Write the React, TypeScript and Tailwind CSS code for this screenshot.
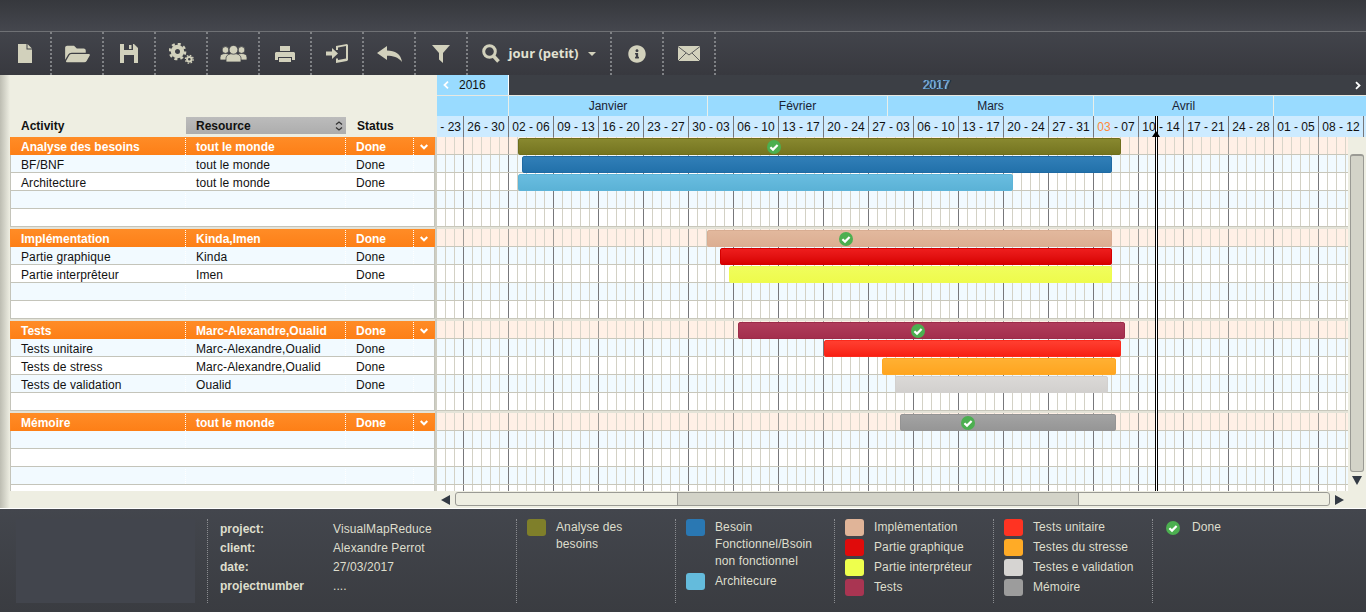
import { ReactNode } from "react";
import { FaInfoCircle, FaFolderOpen } from "react-icons/fa";

type Bar = { pos: string; color: string; check?: string };
type Row = { activity: string; resource: string; status: string; bar?: Bar };

const groups: Row[][] = [
  [
    { activity: "Analyse des besoins", resource: "tout le monde", status: "Done", bar: { pos: "left-[81px] w-[603px]", color: "from-[#88882f] to-[#757520] border-[#6e6e1c]", check: "left-[248px]" } },
    { activity: "BF/BNF", resource: "tout le monde", status: "Done", bar: { pos: "left-[85px] w-[590px]", color: "from-[#317fb8] to-[#2271aa] border-[#1f6aa3]" } },
    { activity: "Architecture", resource: "tout le monde", status: "Done", bar: { pos: "left-[81px] w-[495px]", color: "from-[#69bde0] to-[#5bb2d6] border-[#5db4d8]" } },
    { activity: "", resource: "", status: "" },
    { activity: "", resource: "", status: "" },
  ],
  [
    { activity: "Implémentation", resource: "Kinda,Imen", status: "Done", bar: { pos: "left-[270px] w-[405px]", color: "from-[#e2b89d] to-[#dcae92] border-[#d9ad92]", check: "left-[131px]" } },
    { activity: "Partie graphique", resource: "Kinda", status: "Done", bar: { pos: "left-[283px] w-[392px]", color: "from-[#ee1d1d] to-[#d80000] border-[#d50000]" } },
    { activity: "Partie interprêteur", resource: "Imen", status: "Done", bar: { pos: "left-[292px] w-[383px]", color: "from-[#f0fd5c] to-[#eefb4c] border-[#eefb50]" } },
    { activity: "", resource: "", status: "" },
    { activity: "", resource: "", status: "" },
  ],
  [
    { activity: "Tests", resource: "Marc-Alexandre,Oualid", status: "Done", bar: { pos: "left-[301px] w-[387px]", color: "from-[#b03c5b] to-[#a32e4d] border-[#9c2b49]", check: "left-[172px]" } },
    { activity: "Tests unitaire", resource: "Marc-Alexandre,Oualid", status: "Done", bar: { pos: "left-[387px] w-[297px]", color: "from-[#ff3e30] to-[#f81f12] border-[#fb2a1c]" } },
    { activity: "Tests de stress", resource: "Marc-Alexandre,Oualid", status: "Done", bar: { pos: "left-[445px] w-[234px]", color: "from-[#ffb032] to-[#ffa51f] border-[#ffa822]" } },
    { activity: "Tests de validation", resource: "Oualid", status: "Done", bar: { pos: "left-[458px] w-[213px]", color: "from-[#dbd9d7] to-[#d2d0ce] border-[#d2d0ce]" } },
    { activity: "", resource: "", status: "" },
  ],
  [
    { activity: "Mémoire", resource: "tout le monde", status: "Done", bar: { pos: "left-[463px] w-[216px]", color: "from-[#a3a3a3] to-[#969696] border-[#949494]", check: "left-[60px]" } },
    { activity: "", resource: "", status: "" },
    { activity: "", resource: "", status: "" },
    { activity: "", resource: "", status: "" },
    { activity: "", resource: "", status: "" },
  ],
];

const weeks = ["26 - 30", "02 - 06", "09 - 13", "16 - 20", "23 - 27", "30 - 03", "06 - 10", "13 - 17", "20 - 24", "27 - 03", "06 - 10", "13 - 17", "20 - 24", "27 - 31", "03 - 07", "10 - 14", "17 - 21", "24 - 28", "01 - 05", "08 - 12"];

const months = [
  { name: "", w: "w-[72px]" },
  { name: "Janvier", w: "w-[199px]" },
  { name: "Février", w: "w-[180px]" },
  { name: "Mars", w: "w-[206px]" },
  { name: "Avril", w: "w-[180px]" },
  { name: "", w: "flex-1" },
];

const gridLines =
  "bg-[repeating-linear-gradient(90deg,transparent_0,transparent_8px,#d3d1c5_8px,#d3d1c5_9px,transparent_9px,transparent_17px,#d3d1c5_17px,#d3d1c5_18px,transparent_18px,transparent_26px,#77777b_26px,#77777b_27px,transparent_27px,transparent_35px,#d3d1c5_35px,#d3d1c5_36px,transparent_36px,transparent_44px,#d3d1c5_44px,#d3d1c5_45px)]";
const gridLinesGroup =
  "bg-[repeating-linear-gradient(90deg,transparent_0,transparent_8px,#d9d5c9_8px,#d9d5c9_9px,transparent_9px,transparent_17px,#d9d5c9_17px,#d9d5c9_18px,transparent_18px,transparent_26px,#a09c98_26px,#a09c98_27px,transparent_27px,transparent_35px,#d9d5c9_35px,#d9d5c9_36px,transparent_36px,transparent_44px,#d9d5c9_44px,#d9d5c9_45px)]";

function Check({ className = "" }: { className?: string }) {
  return (
    <svg viewBox="0 0 14 14" className={`h-[14px] w-[14px] ${className}`}>
      <circle cx="7" cy="7" r="7" fill="#4caf50" />
      <path d="M3.4 7.2 6 9.6 10.6 5" fill="none" stroke="#fff" strokeWidth="2.2" />
    </svg>
  );
}

function ToolButton({ children, wide }: { children: ReactNode; wide?: boolean }) {
  return (
    <div className={`flex h-full items-center justify-center border-r-2 border-dotted border-[#7f8185] text-[#d2d1bc] ${wide ? "w-[144px]" : "w-[52px]"}`}>
      {children}
    </div>
  );
}

function Toolbar() {
  return (
    <div className="flex h-[44px] border-t border-[#6f7175] bg-linear-to-b from-[#42444b] to-[#38393f]">
      <ToolButton>
        <svg viewBox="0 0 14 19" className="h-[19px] w-[14px]" fill="#d2d1bc">
          <path d="M0 0h8.500v5.500H14V19H0zM9.500 0 14 4.500H9.500z" />
        </svg>
      </ToolButton>
      <ToolButton>
        <FaFolderOpen className="h-[22px] w-[25px]" />
      </ToolButton>
      <ToolButton>
        <svg viewBox="0 0 18 19" className="h-[19px] w-[18px]" fill="#d2d1bc">
          <path fillRule="evenodd" d="M0 0h14l4 4v15H0zM4 0v6h9V0zM9 1h2.500v4H9zM4 11v8h10v-8z" />
        </svg>
      </ToolButton>
      <ToolButton>
        <svg viewBox="0 0 25 21" className="h-[21px] w-[25px]" fill="none" stroke="#d2d1bc">
          <circle cx="8.500" cy="8.500" r="4.600" strokeWidth="4.200" />
          <circle cx="8.500" cy="8.500" r="7.600" strokeWidth="2.500" strokeDasharray="3 2.970" />
          <circle cx="20.300" cy="16.300" r="2.300" strokeWidth="2" />
          <circle cx="20.300" cy="16.300" r="3.900" strokeWidth="1.300" strokeDasharray="1.600 1.460" />
        </svg>
      </ToolButton>
      <ToolButton>
        <svg viewBox="0 0 27 17" className="h-[17px] w-[27px]" fill="#d2d1bc" stroke="#3d3f45" strokeWidth="0.800">
          <circle cx="5.500" cy="5" r="3.400" />
          <path d="M0 15v-2.500C0 9.500 2.500 8.500 5.500 8.500S11 9.500 11 12.500V15z" />
          <circle cx="21.500" cy="5" r="3.400" />
          <path d="M16 15v-2.500c0-3 2.500-4 5.500-4s5.500 1 5.500 4V15z" />
          <path d="M6 17v-3.500C6 10 9.500 8.500 13.500 8.500S21 10 21 13.500V17z" />
          <circle cx="13.500" cy="4.800" r="4.400" />
        </svg>
      </ToolButton>
      <ToolButton>
        <svg viewBox="0 0 20 16" className="h-[16px] w-[20px]" fill="#d2d1bc">
          <path d="M5 0h10v5H5zM1 6h18l1 1v7h-3v-3H3v3H0V7zM4 12h12v4H4z" />
        </svg>
      </ToolButton>
      <ToolButton>
        <svg viewBox="0 0 22 19" className="h-[19px] w-[22px]" fill="#d2d1bc">
          <path fillRule="evenodd" d="M10 2 21 0l1 1v15l-1 1-11 2v-4.500h2V16l8-1.500V2l-8 1.500V6h-2z" />
          <path d="M0 7.500h6V4l6 5.500L6 15v-3.500H0z" />
        </svg>
      </ToolButton>
      <ToolButton>
        <svg viewBox="0 0 25 16" className="h-[16px] w-[25px]" fill="#d2d1bc">
          <path d="M0 7 10 0v4.500C18 4.500 24 8 25 16 21 11 16 9.700 10 9.700V14z" />
        </svg>
      </ToolButton>
      <ToolButton>
        <svg viewBox="0 0 18 18" className="h-[18px] w-[18px]" fill="#d2d1bc">
          <path d="M0 0h18l-7 8v10l-4-3.500V8z" />
        </svg>
      </ToolButton>
      <ToolButton wide>
        <svg viewBox="0 0 18 19" className="h-[19px] w-[18px]" fill="none" stroke="#d2d1bc">
          <circle cx="7.500" cy="7.500" r="5.800" strokeWidth="3" />
          <path d="M11.500 12 16.500 17.500" strokeWidth="3.600" />
        </svg>
        <span className="ml-[9px] font-['Open_Sans',sans-serif] text-[13px] font-bold text-[#e2e2d2]">jour (petit)</span>
        <span className="ml-[10px] h-0 w-0 border-x-[4px] border-t-[4px] border-x-transparent border-t-[#d2d1bc]" />
      </ToolButton>
      <ToolButton>
        <FaInfoCircle className="h-[18px] w-[18px]" />
      </ToolButton>
      <ToolButton>
        <svg viewBox="0 0 22 15" className="h-[15px] w-[22px]">
          <path d="M0 0h22v15H0z" fill="#d2d1bc" />
          <path d="M0 .5 11 9 22 .5M0 15l8-8M22 15l-8-8" fill="none" stroke="#3c3e44" strokeWidth="0.8" />
        </svg>
      </ToolButton>
    </div>
  );
}

function TaskTable() {
  return (
    <div className="flex w-[427px] flex-col">
      <div className="flex h-[62px] items-end pb-[3px] font-bold text-[#111]">
        <div className="flex h-[17px] w-[176px] items-center pl-[11px]">Activity</div>
        <div className="flex h-[17px] w-[160px] items-center justify-between bg-linear-to-b from-[#bcbcbc] to-[#adadad] pl-[10px] pr-[3px]">
          Resource
          <svg viewBox="0 0 8 10" className="h-[10px] w-[8px]" fill="none" stroke="#333" strokeWidth="1.300">
            <path d="M1 3.500 4 1l3 2.500M1 6.500 4 9l3-2.500" />
          </svg>
        </div>
        <div className="flex h-[17px] items-center pl-[11px]">Status</div>
      </div>
      <div className="h-[354px] overflow-hidden border-r-2 border-[#cfcec3]">
        {groups.map((rows, g) => (
          <div key={g} className="border-b-2 border-[#e4e3d8]">
            {rows.map((row, i) => (
              <div
                key={i}
                className={`flex h-[18px] items-center border-x ${
                  i === 0
                    ? "border-[#ff8620] bg-linear-to-b from-[#ff8c26] to-[#fd7f16] pt-[1px] font-bold text-white"
                    : `border-b border-[#c4c4ba] pt-[2px] tracking-[0.1px] text-[#111] ${i % 2 === 1 ? "bg-[#f2faff]" : "bg-white"}`
                }`}
              >
                <div className="flex h-full w-[175px] items-center border-r border-dotted border-white pl-[10px]">{row.activity}</div>
                <div className="flex h-full w-[160px] items-center border-r border-dotted border-white pl-[10px]">{row.resource}</div>
                <div className="flex h-full w-[68px] items-center border-r border-dotted border-white pl-[10px]">{row.status}</div>
                <div className="flex flex-1 justify-center">
                  {i === 0 && (
                    <svg viewBox="0 0 8 6" className="h-[6px] w-[8px]" fill="none" stroke="#fff" strokeWidth="2">
                      <path d="M.7 1 4 4.300 7.300 1" />
                    </svg>
                  )}
                </div>
              </div>
            ))}
          </div>
        ))}
      </div>
    </div>
  );
}

function GanttHeader() {
  return (
    <div className="h-[62px]">
      <div className="flex h-[20px] items-center">
        <div className="flex h-full w-[72px] items-center border-r border-white bg-[#99dbff] pl-[6px] text-[#111]">
          <svg viewBox="0 0 6 8" className="h-[8px] w-[6px]" fill="none" stroke="#fff" strokeWidth="1.800">
            <path d="M5 .7 1.500 4 5 7.300" />
          </svg>
          <span className="ml-[10px]">2016</span>
        </div>
        <div className="flex-1 pl-[10px] text-center text-[#4f8fc4] [text-shadow:1px_0_0_#16283c,-1px_0_0_#a8d6f5]">2017</div>
        <svg viewBox="0 0 6 8" className="mr-[5px] h-[9px] w-[6px]" fill="none" stroke="#fff" strokeWidth="1.800">
          <path d="M1 .7 4.500 4 1 7.300" />
        </svg>
      </div>
      <div className="flex h-[21px] border-t border-[#e8e8e0] bg-[#99dbff] text-[#1b2233]">
        {months.map((m, i) => (
          <div key={i} className={`flex items-center justify-center border-r border-[#e9efe9] last:border-r-0 ${m.w}`}>
            {m.name}
          </div>
        ))}
      </div>
      <div className="flex h-[21px] overflow-hidden bg-[#cdebff] text-[#111]">
        <div className="flex w-[27px] shrink-0 items-center justify-end whitespace-nowrap border-r border-[#77777b] pr-[2px]">- 23</div>
        {weeks.map((w, i) => (
          <div key={i} className="flex w-[45px] shrink-0 items-center justify-center border-r border-[#77777b]">
            {i === 14 ? (
              <span>
                <span className="text-[#ff8a3c]">03</span> - 07
              </span>
            ) : (
              w
            )}
          </div>
        ))}
      </div>
    </div>
  );
}

function GanttGrid() {
  return (
    <div className="h-[354px] w-[911px] overflow-hidden">
      {groups.map((rows, g) => (
        <div key={g} className="border-b-2 border-[#e4e3d8]">
          {rows.map((row, i) => (
            <div
              key={i}
              className={`relative h-[18px] border-b border-[#c8c7bb] ${i === 0 ? `${gridLinesGroup} bg-[#fff0e6]` : i % 2 === 1 ? `${gridLines} bg-[#f1faff]` : `${gridLines} bg-white`}`}
            >
              {row.bar && (
                <div className={`absolute top-[1px] h-[17px] rounded-[2px] border bg-linear-to-b ${row.bar.pos} ${row.bar.color}`}>
                  {row.bar.check && <Check className={`absolute top-[1px] ${row.bar.check}`} />}
                </div>
              )}
            </div>
          ))}
        </div>
      ))}
    </div>
  );
}

function VerticalScroll() {
  return (
    <div className="flex w-[18px] flex-col items-center bg-[#eeeee2] pt-[17px]">
      <div className="h-[318px] w-[14px] rounded-[3px] border border-[#9a9a94] border-t-2 bg-[#d3d3c8]" />
      <div className="mt-[4px] h-0 w-0 border-x-[5px] border-t-[9px] border-x-transparent border-t-[#333a44]" />
    </div>
  );
}

function HorizontalScroll() {
  return (
    <div className="flex h-[17px] items-start gap-[5px] bg-[#eeeee2] pl-[4px] pt-[1px]">
      <div className="mt-[3px] h-0 w-0 border-y-[5px] border-r-[9px] border-y-transparent border-r-[#333a44]" />
      <div className="flex h-[14px] w-[875px] rounded-[3px] border border-[#9a9a94]">
        <div className="w-[221px]" />
        <div className="w-[402px] border-x border-[#9a9a94] bg-[#d3d3c8]" />
      </div>
      <div className="mt-[3px] h-0 w-0 border-y-[5px] border-l-[9px] border-y-transparent border-l-[#333a44]" />
    </div>
  );
}

function Legend({ items, w }: { items: { color: string; label: ReactNode }[]; w: string }) {
  return (
    <div className={`flex flex-col gap-[3px] border-l border-dotted border-[#8a8c90] pl-[10px] ${w}`}>
      {items.map((it, i) => (
        <div key={i} className="flex gap-[10px] leading-[17px]">
          <div className={`h-[17px] w-[19px] shrink-0 rounded-[3px] ${it.color}`} />
          <div className="w-[105px]">{it.label}</div>
        </div>
      ))}
    </div>
  );
}

function Footer() {
  const info = [
    ["project:", "VisualMapReduce"],
    ["client:", "Alexandre Perrot"],
    ["date:", "27/03/2017"],
    ["projectnumber", "...."],
  ];
  return (
    <div className="flex h-[103px] bg-linear-to-b from-[#43464d] to-[#3a3c41] pl-[16px] pt-[10px] tracking-[0.1px] text-[#dedecd]">
      <div className="mr-[12px] h-[84px] w-[179px] bg-[#42454d]" />
      <div className="h-[84px] w-[309px] border-l border-dotted border-[#8a8c90] pl-[12px] pt-[1px]">
        <div className="grid grid-cols-[113px_1fr] leading-[19px]">
          {info.map(([k, v]) => (
            <div key={k} className="contents">
              <div className="font-bold tracking-normal">{k}</div>
              <div>{v}</div>
            </div>
          ))}
        </div>
      </div>
      <Legend w="w-[159px] h-[84px]" items={[{ color: "bg-[#7f7f2a]", label: <span className="block w-[80px]">Analyse des besoins</span> }]} />
      <Legend
        w="w-[159px] h-[84px]"
        items={[
          { color: "bg-[#2a78b3]", label: "Besoin Fonctionnel/Bsoin non fonctionnel" },
          { color: "bg-[#64bbdc]", label: "Architecure" },
        ]}
      />
      <Legend
        w="w-[159px] h-[84px]"
        items={[
          { color: "bg-[#e0b498]", label: "Implèmentation" },
          { color: "bg-[#e00b0b]", label: "Partie graphique" },
          { color: "bg-[#eeff4d]", label: "Partie interpréteur" },
          { color: "bg-[#a93552]", label: "Tests" },
        ]}
      />
      <Legend
        w="w-[159px] h-[84px]"
        items={[
          { color: "bg-[#ff3322]", label: "Tests unitaire" },
          { color: "bg-[#ffab26]", label: "Testes du stresse" },
          { color: "bg-[#d6d4d2]", label: "Testes e validation" },
          { color: "bg-[#9c9c9c]", label: "Mémoire" },
        ]}
      />
      <div className="flex h-[84px] gap-[12px] border-l border-dotted border-[#8a8c90] pl-[13px] leading-[17px]">
        <Check className="mt-[2px]" />
        <span>Done</span>
      </div>
    </div>
  );
}

export default function App() {
  return (
    <div className="h-[612px] w-[1366px] overflow-hidden font-['Liberation_Sans',Arial,sans-serif] text-[12px]">
      <div className="h-[31px] bg-linear-to-b from-[#36383d] to-[#45474e]" />
      <Toolbar />
      <div className="flex h-[433px] bg-[#eeeee2]">
        <div className="w-[10px] bg-linear-to-r from-[#bdbdb2] to-[#eeeee2]" />
        <TaskTable />
        <div className="relative flex flex-1 flex-col bg-[#3c3f45]">
          <GanttHeader />
          <div className="flex">
            <GanttGrid />
            <VerticalScroll />
          </div>
          <HorizontalScroll />
          {/* today marker */}
          <div className="absolute left-[718px] top-[41px] h-[375px] w-[3px] border-x border-black bg-white" />
          <div className="absolute left-[715px] top-[56px] h-0 w-0 border-x-[4.500px] border-b-[6px] border-x-transparent border-b-black" />
        </div>
      </div>
      <div className="h-[1px] bg-white" />
      <Footer />
    </div>
  );
}
